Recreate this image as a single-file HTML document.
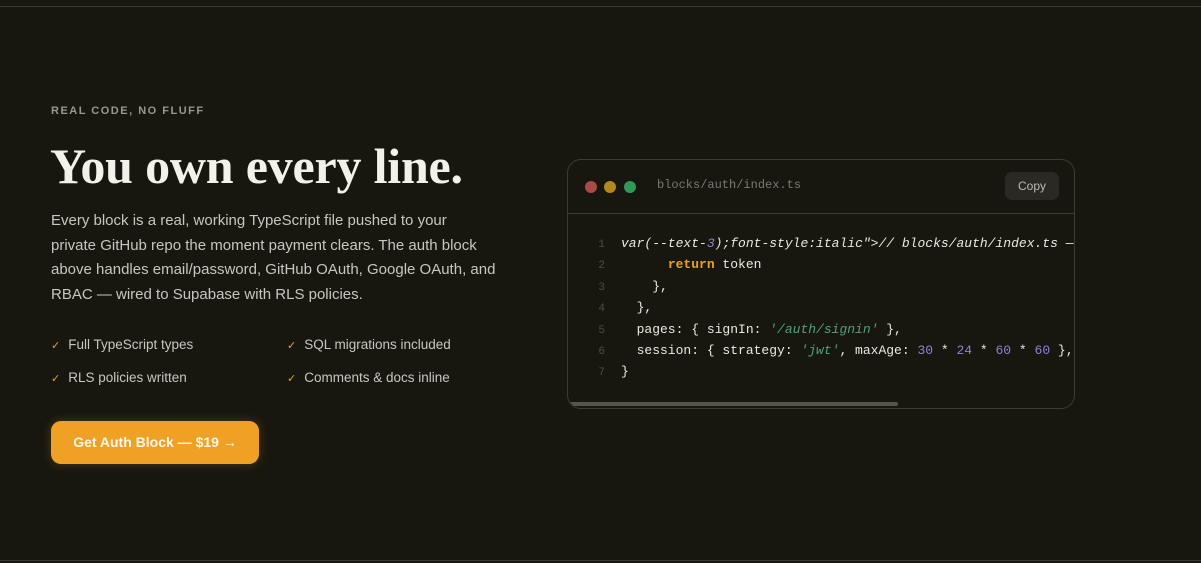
<!DOCTYPE html>
<html><head><meta charset="utf-8"><style>
*{margin:0;padding:0;box-sizing:border-box}
body{width:1201px;height:563px;background:#18170f;font-family:"Liberation Sans",sans-serif;position:relative;overflow:hidden}
.line{position:absolute;left:0;right:0;height:1px;background:#3a3830}
.eyebrow{position:absolute;left:51px;top:105px;font-size:11px;letter-spacing:1.5px;color:#9a978c;font-weight:bold}
h1{position:absolute;left:50px;top:137px;font-family:"Liberation Serif",serif;font-weight:bold;font-size:50px;color:#f3f1ea;letter-spacing:-0.2px;white-space:nowrap}
p{position:absolute;left:51px;top:209px;white-space:nowrap;font-size:15px;line-height:24.7px;color:#c9c6bc}
.f{position:absolute;font-size:13.5px;color:#c9c6bc}
.f b{color:#e8a22a;font-weight:normal;margin-right:8px;font-size:11px}
.btn{position:absolute;left:51px;top:421px;width:208px;height:43px;border-radius:10px;background:#efa125;color:#fff8ea;font-weight:bold;font-size:14px;text-align:center;line-height:43px;box-shadow:0 0 10px rgba(239,161,37,.25)}
.win{position:absolute;left:567px;top:159px;width:508px;height:250px;border:1px solid #3c3a33;border-radius:14px;background:#17160f;overflow:hidden}
.hd{height:54px;border-bottom:1px solid #3c3a33;position:relative}
.d{position:absolute;top:21px;width:12px;height:12px;border-radius:50%}
.fn{position:absolute;left:89px;top:18px;font-family:"Liberation Mono",monospace;font-size:12px;color:#7c796f}
.cp{position:absolute;left:437px;top:12px;width:54px;height:28px;border-radius:7px;background:#2a2923;color:#bdbab0;font-size:12px;text-align:center;line-height:28px}
.code{position:absolute;left:0;top:73px;font-family:"Liberation Mono",monospace;font-size:13px;color:#ece9e0;white-space:pre}
.code div{height:21.4px;line-height:21.4px}
.n{display:inline-block;width:53px;text-align:right;padding-right:16px;color:#4e4c45;font-size:11px;line-height:1}
.k{color:#efa125;font-weight:bold}.s{color:#4fa37c;font-style:italic}.m{color:#8f82d4}
.sb{position:absolute;left:2px;bottom:2px;width:328px;height:4px;border-radius:2px;background:#55534c}
</style></head><body>
<div class="line" style="top:6px"></div>
<div class="line" style="top:560px"></div>
<div class="eyebrow">REAL CODE, NO FLUFF</div>
<h1>You own every line.</h1>
<p>Every block is a real, working TypeScript file pushed to your<br>private GitHub repo the moment payment clears. The auth block<br>above handles email/password, GitHub OAuth, Google OAuth, and<br>RBAC — wired to Supabase with RLS policies.</p>
<div class="f" style="left:51px;top:337px"><b>✓</b>Full TypeScript types</div>
<div class="f" style="left:287px;top:337px"><b>✓</b>SQL migrations included</div>
<div class="f" style="left:51px;top:370px"><b>✓</b>RLS policies written</div>
<div class="f" style="left:287px;top:370px"><b>✓</b>Comments &amp; docs inline</div>
<div class="btn">Get Auth Block — $19 →</div>
<div class="win">
<div class="hd">
<div class="d" style="left:17px;background:#a94b47"></div>
<div class="d" style="left:36px;background:#b08a1c"></div>
<div class="d" style="left:56px;background:#2f9a57"></div>
<div class="fn">blocks/auth/index.ts</div>
<div class="cp">Copy</div>
</div>
<div class="code"><div><span class="n">1</span><i>var(--text-<span class="m">3</span>);font-style:italic"&gt;// blocks/auth/index.ts —</i></div><div><span class="n">2</span>      <span class="k">return</span> token</div><div><span class="n">3</span>    },</div><div><span class="n">4</span>  },</div><div><span class="n">5</span>  pages: { signIn: <span class="s">'/auth/signin'</span> },</div><div><span class="n">6</span>  session: { strategy: <span class="s">'jwt'</span>, maxAge: <span class="m">30</span> * <span class="m">24</span> * <span class="m">60</span> * <span class="m">60</span> },</div><div><span class="n">7</span>}</div></div>
<div class="sb"></div>
</div>
</body></html>
